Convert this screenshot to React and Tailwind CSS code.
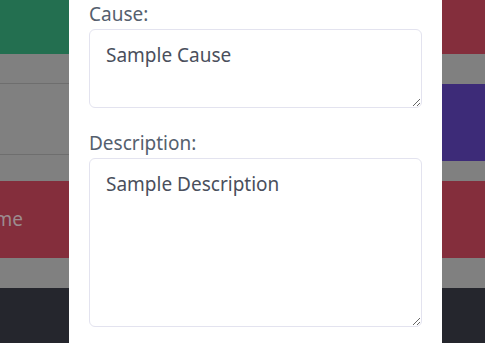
export default function App() {
  const bandsLeft = (
    <div className="flex flex-col w-[69px] shrink-0 overflow-hidden">
      <div className="h-[54px] bg-[#236f50]" />
      <div className="h-[30px] bg-[#808080] border-b border-[#6e6e6e]" />
      <div className="h-[71px] bg-[#808080] border-b border-[#6e6e6e]" />
      <div className="h-[26px] bg-[#808080]" />
      <div className="h-[77px] bg-[#842e3c] flex items-center justify-end">
        <span className="text-[19px] text-[#9c8b8f] whitespace-nowrap mr-[46px]">Name</span>
      </div>
      <div className="h-[30px] bg-[#808080]" />
      <div className="flex-1 bg-[#25262d]" />
    </div>
  );

  const bandsRight = (
    <div className="flex flex-col flex-1">
      <div className="h-[54px] bg-[#842e3c]" />
      <div className="h-[30px] bg-[#808080]" />
      <div className="h-[77px] bg-[#3d2b78]" />
      <div className="h-[20px] bg-[#808080]" />
      <div className="h-[77px] bg-[#842e3c]" />
      <div className="h-[30px] bg-[#808080]" />
      <div className="flex-1 bg-[#25262d]" />
    </div>
  );

  return (
    <div
      className="flex w-[485px] h-[343px] overflow-hidden"
      style={{ fontFamily: '"Noto Sans", sans-serif' }}
    >
      {bandsLeft}
      <div className="w-[373px] bg-white px-5 pt-px">
        <label className="block text-[19px] leading-[27px] text-[#55606e] mb-px">Cause:</label>
        <textarea
          className="block w-full h-[79px] rounded-[6px] border border-[#e3e3ef] px-4 py-3 text-[19px] leading-[27px] text-[#4a4f5c] outline-none"
          defaultValue="Sample Cause"
        />
        <label className="block mt-[22px] text-[19px] leading-[27px] text-[#55606e] mb-px">Description:</label>
        <textarea
          className="block w-full h-[169px] rounded-[6px] border border-[#e3e3ef] px-4 py-3 text-[19px] leading-[27px] text-[#4a4f5c] outline-none"
          defaultValue="Sample Description"
        />
      </div>
      {bandsRight}
    </div>
  );
}
